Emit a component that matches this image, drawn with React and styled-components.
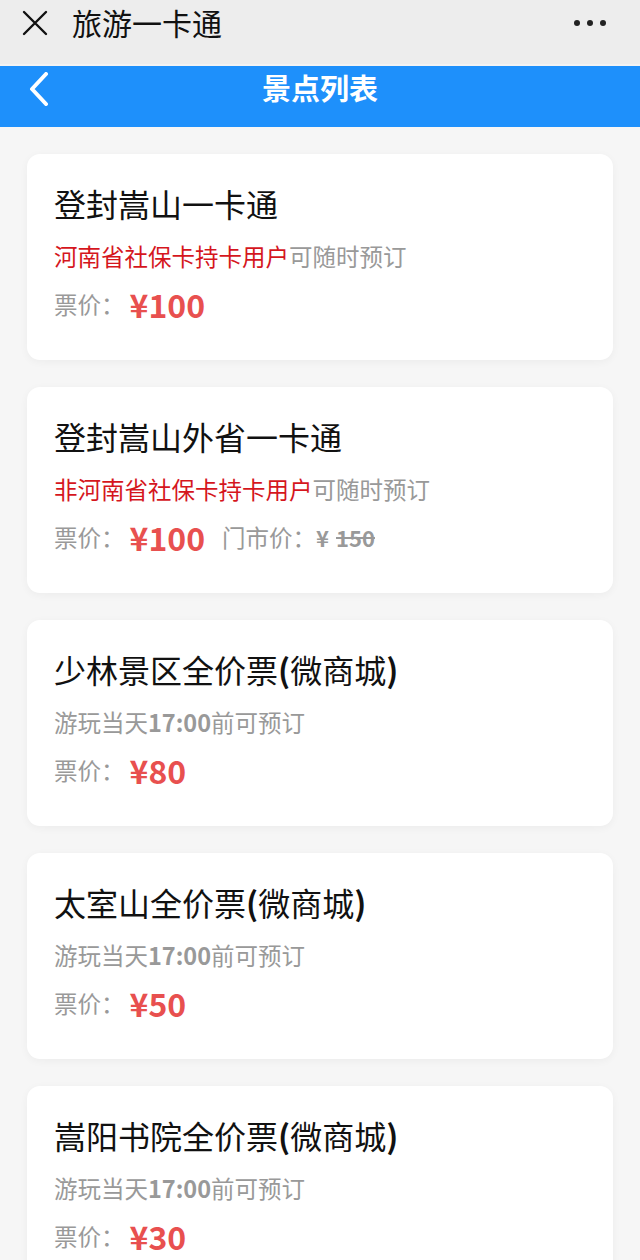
import React from "react";
import styled, { createGlobalStyle } from "styled-components";

const Global = createGlobalStyle`
  html, body { margin: 0; padding: 0; background: #f6f6f6; }
  body { font-family: "Noto Sans CJK SC", "Noto Sans", sans-serif; }
  * { box-sizing: border-box; }
`;

const Page = styled.div`
  width: 640px;
  min-height: 1260px;
  background: #f6f6f6;
  overflow: hidden;
`;

const TopBar = styled.div`
  height: 66px;
  background: #ededed;
  border-bottom: 2px solid #f3f3f3;
  display: flex;
  align-items: center;
  padding: 0 22px 18px 22px;
`;

const TopTitle = styled.div`
  font-size: 30px;
  color: #111;
  margin: -2px 0 0 24px;
  line-height: 40px;
  flex: 1;
`;

const Dots = styled.div`
  display: flex;
  gap: 7px;
  margin-right: 12px;
  span {
    width: 6px;
    height: 6px;
    border-radius: 50%;
    background: #222;
  }
`;

const NavBar = styled.div`
  height: 61px;
  background: #1e90fb;
  display: flex;
  align-items: center;
  justify-content: center;
  position: relative;
`;

const BackBtn = styled.div`
  position: absolute;
  left: 28px;
  top: 6px;
  display: flex;
`;

const NavTitle = styled.div`
  color: #fff;
  font-size: 29px;
  font-weight: 700;
  line-height: 40px;
  margin-top: -19px;
`;

const List = styled.div`
  padding: 27px 27px;
  display: flex;
  flex-direction: column;
  gap: 27px;
`;

const Card = styled.div`
  background: #fff;
  border-radius: 13px;
  box-shadow: 0 2px 8px rgba(0, 0, 0, 0.045);
  padding: 29px 27px 34px;
  height: 206px;
`;

const Title = styled.div`
  font-size: 32px;
  color: #111;
  line-height: 40px;
  white-space: nowrap;
`;

const Sub = styled.div`
  margin-top: 16px;
  font-size: 23.5px;
  line-height: 34px;
  color: #999;
  white-space: nowrap;
`;

const Red = styled.span`
  color: #d5161d;
`;

const Strong = styled.span`
  font-weight: 700;
`;

const PriceRow = styled.div`
  margin-top: 11px;
  display: flex;
  align-items: center;
  height: 40px;
  color: #999;
  font-size: 23.5px;
  white-space: nowrap;
`;

const Price = styled.span`
  color: #e8504f;
  font-size: 32px;
  font-weight: 700;
  margin-left: 5px;
`;

const Market = styled.span`
  margin-left: 17px;
  color: #999;
`;

const Old = styled.span`
  font-size: 22px;
  font-weight: 700;
  color: #999;
  s { margin-left: 7px; }
`;

const items = [
  {
    title: "登封嵩山一卡通",
    red: "河南省社保卡持卡用户",
    note: "可随时预订",
    price: "¥100",
  },
  {
    title: "登封嵩山外省一卡通",
    red: "非河南省社保卡持卡用户",
    note: "可随时预订",
    price: "¥100",
    market: "150",
  },
  { title: "少林景区全价票(微商城)", price: "¥80" },
  { title: "太室山全价票(微商城)", price: "¥50" },
  { title: "嵩阳书院全价票(微商城)", price: "¥30" },
];

function renderTitle(t) {
  return t.split(/([()])/).map((part, i) =>
    part === "(" || part === ")" ? <Strong key={i}>{part}</Strong> : part
  );
}

export default function App() {
  return (
    <Page>
      <Global />
      <TopBar>
        <svg width="26" height="26" viewBox="0 0 26 26">
          <path d="M2 2 L24 24 M24 2 L2 24" stroke="#111" strokeWidth="2.4" strokeLinecap="round" />
        </svg>
        <TopTitle>旅游一卡通</TopTitle>
        <Dots>
          <span />
          <span />
          <span />
        </Dots>
      </TopBar>
      <NavBar>
        <BackBtn>
          <svg width="22" height="34" viewBox="0 0 22 34">
            <path d="M18 2 L4 17 L18 32" stroke="#fff" strokeWidth="4" fill="none" strokeLinecap="round" strokeLinejoin="round" />
          </svg>
        </BackBtn>
        <NavTitle>景点列表</NavTitle>
      </NavBar>
      <List>
        {items.map((it) => (
          <Card key={it.title}>
            <Title>{renderTitle(it.title)}</Title>
            <Sub>
              {it.red ? (
                <>
                  <Red>{it.red}</Red>
                  {it.note}
                </>
              ) : (
                <>
                  游玩当天<Strong>17:00</Strong>前可预订
                </>
              )}
            </Sub>
            <PriceRow>
              票价：<Price>{it.price}</Price>
              {it.market && (
                <>
                  <Market>门市价：</Market>
                  <Old>
                    ¥<s>{it.market}</s>
                  </Old>
                </>
              )}
            </PriceRow>
          </Card>
        ))}
      </List>
    </Page>
  );
}
